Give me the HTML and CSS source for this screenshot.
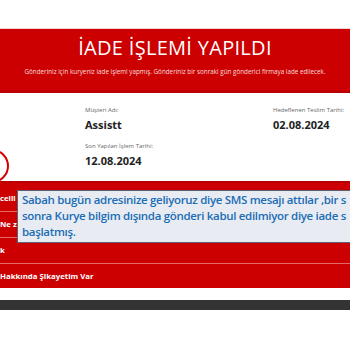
FILE: index.html
```html
<!DOCTYPE html>
<html lang="tr">
<head>
  <meta charset="UTF-8">
  <meta name="viewport" content="width=device-width, initial-scale=1.0">
  <title>İade İşlemi Yapıldı</title>
  <link rel="stylesheet" href="styles.css">
</head>
<body>
  <div class="top"></div>

  <div class="banner">
    <h1>İADE İŞLEMİ YAPILDI</h1>
    <p>Gönderiniz için kuryeniz iade işlemi yapmış. Gönderiniz bir sonraki gün gönderici firmaya iade edilecek.</p>
  </div>

  <div class="card">
    <div class="info">
      <div class="field">
        <span class="label">Müşteri Adı:</span>
        <span class="value">Assistt</span>
      </div>
      <div class="field">
        <span class="label">Hedeflenen Teslim Tarihi:</span>
        <span class="value">02.08.2024</span>
      </div>
      <div class="field">
        <span class="label">Son Yapılan İşlem Tarihi:</span>
        <span class="value">12.08.2024</span>
      </div>
    </div>
  </div>

  <div class="actions">
    <div class="row row-first">celli</div>
    <div class="row">Ne z</div>
    <div class="row">k</div>
    <div class="row row-last">Hakkında Şikayetim Var</div>
  </div>

  <div class="gap"></div>
  <div class="footer"></div>

  <div class="mark"></div>

  <div class="note">
    Sabah bugün adresinize geliyoruz diye SMS mesajı attılar ,bir s<br>
    sonra Kurye bilgim dışında gönderi kabul edilmiyor diye iade s<br>
    başlatmış.
  </div>
</body>
</html>
```

FILE: styles.css
```css
body {
  margin: 0;
  width: 350px;
  height: 350px;
  overflow: hidden;
  position: relative;
  font-family: 'Open Sans', 'Noto Sans', sans-serif;
  background: #fff;
}
.top {
  height: 28px;
  border-bottom: 1px solid #f2d2d2;
}
.banner {
  background: #cc0000;
  height: 62px;
  color: #fff;
  text-align: center;
  display: flex;
  flex-direction: column;
  align-items: center;
}
.banner h1 {
  margin: 5px 0 0;
  font-size: 20px;
  font-weight: 400;
  line-height: 28px;
  letter-spacing: 0.3px;
}
.banner p {
  margin: 5px 0 0;
  font-size: 6.3px;
  line-height: 9px;
  color: #f6dede;
}
.card {
  background: #fff;
  border-top: 2px solid #b80000;
  border-bottom: 2px solid #b80000;
  height: 88px;
}
.info {
  display: grid;
  grid-template-columns: 188px 1fr;
  row-gap: 10px;
  padding: 13px 0 0 85px;
}
.field {
  display: flex;
  flex-direction: column;
}
.label {
  font-size: 6px;
  color: #666;
  line-height: 9px;
}
.value {
  margin-top: 3px;
  font-size: 11px;
  font-weight: 700;
  color: #222;
  line-height: 14px;
}
.actions {
  background: #cc0000;
}
.row {
  height: 25px;
  border-bottom: 1px solid #e46a6a;
  color: #fff;
  font-size: 7.8px;
  font-weight: 700;
  line-height: 25px;
  white-space: nowrap;
}
.row-first {
  height: 28px;
  line-height: 30px;
}
.row-last {
  height: 24px;
  border-bottom: none;
}
.gap {
  height: 12px;
}
.footer {
  height: 10px;
  background: #333;
}
.mark {
  position: absolute;
  left: -25px;
  top: 149px;
  width: 30px;
  height: 30px;
  border: 2px solid #d40000;
  border-radius: 50%;
}
.note {
  position: absolute;
  left: 17px;
  top: 190px;
  width: 420px;
  height: 50px;
  padding: 1px 0 0 4px;
  background: #e8ecf2;
  border: 1px solid #5a6270;
  color: #1b6db5;
  font-size: 11.5px;
  font-weight: 600;
  line-height: 16px;
  letter-spacing: -0.32px;
  white-space: nowrap;
}
```
